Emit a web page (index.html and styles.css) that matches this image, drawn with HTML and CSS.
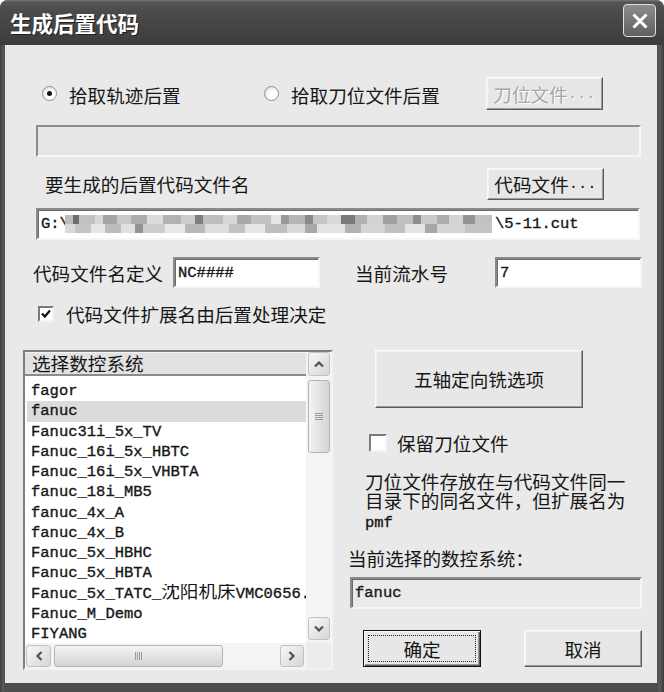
FILE: index.html
```html
<!DOCTYPE html>
<html lang="zh-CN">
<head>
<meta charset="utf-8">
<title>生成后置代码</title>
<link rel="stylesheet" href="styles.css">
</head>
<body>
<div class="window">
  <div class="titlebar">
    <span class="title">生成后置代码</span>
    <span class="close"><svg width="20" height="20" viewBox="0 0 20 20"><path d="M3.5 3.5L16.5 16.5M16.5 3.5L3.5 16.5" stroke="#fff" stroke-width="3"/></svg></span>
  </div>
  <div class="frame">
    <div class="body">
      <div class="row r1">
        <div class="opt o1"><span class="radio on"></span><span class="txt">拾取轨迹后置</span></div>
        <div class="opt o2"><span class="radio"></span><span class="txt">拾取刀位文件后置</span></div>
        <div class="btn dis b-tw">刀位文件<span class="lat dots">...</span></div>
      </div>
      <div class="progress"></div>
      <div class="row r3">
        <span class="lbl l-out">要生成的后置代码文件名</span>
        <div class="btn b-code">代码文件<span class="lat dots">...</span></div>
      </div>
      <div class="field path"><span class="lat">G:\</span><span class="mosaic"></span><span class="lat">\5-11.cut</span></div>
      <div class="row r5">
        <span class="lbl l-def">代码文件名定义</span>
        <div class="field inp"><span class="lat">NC####</span></div>
        <span class="lbl l-num">当前流水号</span>
        <div class="field inp"><span class="lat">7</span></div>
      </div>
      <div class="row r6">
        <span class="check"><svg width="12" height="12" viewBox="0 0 12 12"><path d="M2 5.5L4.8 8.5L10 2.5" fill="none" stroke="#111" stroke-width="2.2"/></svg></span>
        <span class="txt">代码文件扩展名由后置处理决定</span>
      </div>
      <div class="bottom">
        <div class="listbox">
          <div class="listcol">
            <div class="lhead">选择数控系统</div>
            <div class="items">
              <div class="item">fagor</div>
              <div class="item sel">fanuc</div>
              <div class="item">Fanuc31i_5x_TV</div>
              <div class="item">Fanuc_16i_5x_HBTC</div>
              <div class="item">Fanuc_16i_5x_VHBTA</div>
              <div class="item">fanuc_18i_MB5</div>
              <div class="item">fanuc_4x_A</div>
              <div class="item">fanuc_4x_B</div>
              <div class="item">Fanuc_5x_HBHC</div>
              <div class="item">Fanuc_5x_HBTA</div>
              <div class="item">Fanuc_5x_TATC_<span class="cjk">沈阳机床</span>VMC0656.</div>
              <div class="item">Fanuc_M_Demo</div>
              <div class="item">FIYANG</div>
            </div>
          </div>
          <div class="vscroll">
            <span class="sbtn v-up"><svg width="12" height="8" viewBox="0 0 12 8"><path d="M2 6.5L6 2.5L10 6.5" fill="none" stroke="#505050" stroke-width="2.2"/></svg></span>
            <span class="vthumb"><span class="grip-h"></span></span>
            <span class="vspace"></span>
            <span class="sbtn v-down"><svg width="12" height="8" viewBox="0 0 12 8"><path d="M2 1.5L6 5.5L10 1.5" fill="none" stroke="#505050" stroke-width="2.2"/></svg></span>
          </div>
          <div class="hscroll">
            <span class="sbtn h-left"><svg width="8" height="12" viewBox="0 0 8 12"><path d="M6.5 2L2.5 6L6.5 10" fill="none" stroke="#505050" stroke-width="2.2"/></svg></span>
            <span class="hthumb"><span class="grip-v"></span></span>
            <span class="hspace"></span>
            <span class="sbtn h-right"><svg width="8" height="12" viewBox="0 0 8 12"><path d="M1.5 2L5.5 6L1.5 10" fill="none" stroke="#505050" stroke-width="2.2"/></svg></span>
          </div>
          <div class="corner"></div>
        </div>
        <div class="rightcol">
          <div class="btn b-five">五轴定向铣选项</div>
          <div class="chkrow"><span class="check big"></span><span class="txt">保留刀位文件</span></div>
          <div class="note">
            <div class="nl">刀位文件存放在与代码文件同一</div>
            <div class="nl">目录下的同名文件，但扩展名为</div>
            <div class="nl"><span class="lat">pmf</span></div>
          </div>
          <div class="lbl l-cur">当前选择的数控系统：</div>
          <div class="field static"><span class="lat">fanuc</span></div>
          <div class="btnrow">
            <div class="btn b-ok"><span class="focus">确定</span></div>
            <div class="btn b-cancel">取消</div>
          </div>
        </div>
      </div>
    </div>
  </div>
</div>
</body>
</html>
```
FILE: styles.css
```css
* { box-sizing: border-box; }
html, body { margin: 0; padding: 0; background: #ffffff; }
body {
  font-family: "Noto Sans CJK SC", "Noto Sans", sans-serif;
  font-size: 18.6px;
  color: #161616;
}
.lat {
  font-family: "Liberation Mono", "DejaVu Sans Mono", monospace;
  font-size: 15.5px;
  -webkit-text-stroke: 0.35px #161616;
}
.dots { vertical-align: -3px; -webkit-text-stroke: 0; }
.btn.dis .dots { -webkit-text-stroke: 0; }
.cjk { font-family: "Noto Sans CJK SC", sans-serif; font-size: 18.6px; }

.window {
  width: 664px;
  height: 692px;
  display: flex;
  flex-direction: column;
  border-radius: 8px 8px 0 0;
  overflow: hidden;
  background: #444;
}
.titlebar {
  height: 45px;
  flex: none;
  display: flex;
  align-items: center;
  justify-content: space-between;
  padding: 0 8px 0 10px;
  background: linear-gradient(#777 0, #555 2px, #4a4a4a 12px, #434343 30px, #3b3b3b 45px);
}
.title {
  color: #fff;
  font-weight: 700;
  font-size: 21.5px;
  line-height: 24px;
  text-shadow: 1px 1px 0 #202020;
  margin-top: 0;
}
.close {
  width: 33px;
  height: 33px;
  margin-top: -4px;
  border: 1px solid #e0e0e0;
  border-radius: 4px;
  background: linear-gradient(#8c8c8c, #606060);
  display: flex;
  align-items: center;
  justify-content: center;
}
.frame {
  flex: 1;
  display: flex;
  padding: 0 7px 9px 5px;
  background: linear-gradient(90deg, #3e3e3e 0, #5a5a5a 3px, #4d4d4d 5px, #4d4d4d 657px, #5a5a5a 660px, #3a3a3a 664px);
}
.body {
  flex: 1;
  background: #e9e9e9;
  display: flex;
  flex-direction: column;
}

.row { display: flex; align-items: center; }
.txt, .lbl { line-height: 22px; white-space: nowrap; }

/* row 1 */
.r1 { margin-top: 32px; height: 33px; padding-left: 37px; }
.opt { display: flex; align-items: center; width: 222px; }
.opt .txt { margin-left: 12px; margin-top: 2px; }
.radio {
  width: 15px; height: 15px;
  border-radius: 50%;
  border: 1px solid #8e8e8e;
  background: radial-gradient(circle at 65% 65%, #ffffff 35%, #d4d4d4 100%);
  display: flex; align-items: center; justify-content: center;
  flex: none;
}
.radio.on::after {
  content: "";
  width: 5px; height: 5px;
  border-radius: 50%;
  background: #111;
}

/* buttons */
.btn {
  display: flex; align-items: center; justify-content: center;
  background: #e7e7e7;
  border: 1px solid;
  border-color: #fbfbfb #5c5c5c #5c5c5c #fbfbfb;
  box-shadow: inset -1px -1px 0 #9c9c9c, inset 1px 1px 0 #f2f2f2;
  white-space: nowrap;
  line-height: 22px;
}
.btn.dis { color: #a6a6a6; text-shadow: 1px 1px 0 #fff; }
.b-tw { width: 117px; height: 33px; }
.b-code { width: 117px; height: 32px; }

/* progress (sunken, empty) */
.progress {
  margin: 15px 0 0 31px;
  width: 605px; height: 32px;
  background: #e6e6e6;
  border: 2px solid;
  border-color: #8d8d8d #f6f6f6 #f6f6f6 #8d8d8d;
}

.r3 { margin-top: 11px; height: 32px; padding-left: 40px; }
.l-out { width: 442px; }

/* fields */
.field {
  display: flex; align-items: center;
  background: #fff;
  border: 2px solid;
  border-color: #8a8a8a #f6f6f6 #f6f6f6 #8a8a8a;
  box-shadow: inset 1px 1px 0 #6a6a6a;
  padding-left: 3px;
  white-space: nowrap;
  overflow: hidden;
}
.path { margin: 8px 0 0 31px; width: 604px; height: 32px; }
.mosaic {
  width: 427px; height: 18px;
  margin: 0 3px 0 -4px;
  flex: none;
  background:
    linear-gradient(90deg, #bdbdbd 0 8px, #6d6d6d 8px 14px, #c2c2c2 14px 30px, #d8d8d8 30px 38px, #a5a5a5 38px 52px, #cacaca 52px 66px, #adadad 66px 82px, #dcdcdc 82px 98px, #b2b2b2 98px 116px, #cdcdcd 116px 130px, #7e7e7e 130px 138px, #bdbdbd 138px 158px, #d8d8d8 158px 172px, #a9a9a9 172px 186px, #c2c2c2 186px 206px, #e6e6e6 206px 216px, #999 216px 224px, #b6b6b6 224px 240px, #8a8a8a 240px 248px, #c6c6c6 248px 262px, #dadada 262px 276px, #7a7a7a 276px 290px, #b0b0b0 290px 302px, #d2d2d2 302px 318px, #a0a0a0 318px 332px, #bfbfbf 332px 348px, #8e8e8e 348px 356px, #cacaca 356px 372px, #acacac 372px 384px, #d4d4d4 384px 398px, #949494 398px 410px, #c2c2c2 410px 427px) top / 100% 9px no-repeat,
    linear-gradient(90deg, #d8d8d8 0 10px, #c4c4c4 10px 26px, #e6e6e6 26px 40px, #bcbcbc 40px 56px, #e0e0e0 56px 70px, #939393 70px 78px, #cdcdcd 78px 100px, #e8e8e8 100px 120px, #b8b8b8 120px 140px, #dddddd 140px 164px, #c2c2c2 164px 180px, #e6e6e6 180px 200px, #bebebe 200px 222px, #dadada 222px 240px, #a8a8a8 240px 252px, #e3e3e3 252px 280px, #b2b2b2 280px 296px, #d4d4d4 296px 320px, #c0c0c0 320px 340px, #e4e4e4 340px 360px, #a6a6a6 360px 372px, #d6d6d6 372px 400px, #c4c4c4 400px 427px) bottom / 100% 9px no-repeat;
}

.r5 { margin-top: 17px; height: 31px; padding-left: 28px; }
.l-def { width: 140px; }
.l-num { width: 140px; margin-left: 35px; }
.inp { width: 147px; height: 31px; }

.r6 { margin-top: 16px; height: 20px; padding-left: 33px; }
.r6 .txt { margin-left: 12px; }
.check {
  width: 16px; height: 16px;
  flex: none;
  background: #fff;
  border: 2px solid;
  border-color: #7a7a7a #f4f4f4 #f4f4f4 #7a7a7a;
  display: flex; align-items: center; justify-content: center;
}

/* bottom area */
.bottom { margin-top: 26px; display: flex; align-items: flex-start; }

.listbox {
  margin-left: 18px;
  width: 310px; height: 320px;
  border: 2px solid;
  border-color: #7e7e7e #f3f3f3 #f3f3f3 #7e7e7e;
  background: #fff;
  display: grid;
  grid-template-columns: 281px 25px;
  grid-template-rows: 291px 25px;
}
.listcol { overflow: hidden; display: flex; flex-direction: column; }
.lhead {
  height: 24px; flex: none;
  background: #e2e2e2;
  border-bottom: 2px solid #8c8c8c;
  border-top: 1px solid #f4f4f4;
  padding-left: 7px;
  line-height: 20px;
  white-space: nowrap;
}
.items { padding-top: 5px; padding-left: 2px; }
.item {
  height: 20.25px;
  line-height: 20.25px;
  padding-left: 4px;
  font-family: "Liberation Mono", "DejaVu Sans Mono", monospace;
  font-size: 15.5px;
  -webkit-text-stroke: 0.35px #161616;
  white-space: nowrap;
  overflow: hidden;
}
.item.sel { background: #dcdcdc; }
.item .cjk { line-height: 0; -webkit-text-stroke: 0; }

.sbtn {
  display: flex; align-items: center; justify-content: center;
  border: 1px solid #c2c2c2;
  border-radius: 3px;
  background: linear-gradient(135deg, #f7f7f7, #d6d6d6);
  flex: none;
}
.vscroll {
  background: #f4f4f4;
  display: flex; flex-direction: column;
  padding: 0 1px 0 2px;
}
.v-up { height: 24px; }
.vthumb {
  height: 73px; margin-top: 4px;
  border: 1px solid #b4b4b4; border-radius: 3px;
  background: linear-gradient(90deg, #f4f4f4, #d4d4d4);
  display: flex; align-items: center; justify-content: center;
  flex: none;
}
.grip-h {
  width: 8px; height: 7px;
  background: repeating-linear-gradient(#9a9a9a 0 1px, transparent 1px 2px);
}
.vspace { flex: 1; }
.v-down { height: 23px; margin-bottom: 3px; }

.hscroll {
  background: #f4f4f4;
  display: flex; align-items: center;
  padding: 2px 2px 1px 1px;
}
.h-left { width: 25px; height: 22px; }
.hthumb {
  width: 169px; height: 22px; margin-left: 3px;
  border: 1px solid #b4b4b4; border-radius: 3px;
  background: linear-gradient(#f4f4f4, #d4d4d4);
  display: flex; align-items: center; justify-content: center;
  flex: none;
}
.grip-v {
  width: 7px; height: 8px;
  background: repeating-linear-gradient(90deg, #9a9a9a 0 1px, transparent 1px 2px);
}
.hspace { flex: 1; }
.h-right { width: 24px; height: 22px; }
.corner { background: #ececec; }

.rightcol { margin-left: 15px; width: 295px; display: flex; flex-direction: column; }
.b-five { margin-left: 27px; width: 208px; height: 58px; }
.chkrow { margin-top: 26px; height: 18px; display: flex; align-items: center; padding-left: 21px; }
.check.big { width: 18px; height: 18px; }
.chkrow .txt { margin-left: 10px; }
.note { margin: 19px 0 0 17px; }
.nl {
  height: 19px;
  line-height: 19px;
  white-space: nowrap;
}
.l-cur { margin-top: 19px; }
.static {
  margin: 8px 0 0 2px;
  width: 292px; height: 32px;
  background: #eaeaea;
}
.btnrow { margin-top: 21px; display: flex; }
.b-ok {
  margin-left: 15px; width: 118px; height: 37px;
  border: 1px solid #111;
  box-shadow: inset 1px 1px 0 #fbfbfb, inset -1px -1px 0 #5c5c5c, inset -2px -2px 0 #9c9c9c;
  padding: 4px;
}
.focus {
  flex: 1; align-self: stretch;
  display: flex; align-items: center; justify-content: center;
  border: 1px dotted #222;
}
.b-cancel { margin-left: 43px; width: 118px; height: 37px; }
```
